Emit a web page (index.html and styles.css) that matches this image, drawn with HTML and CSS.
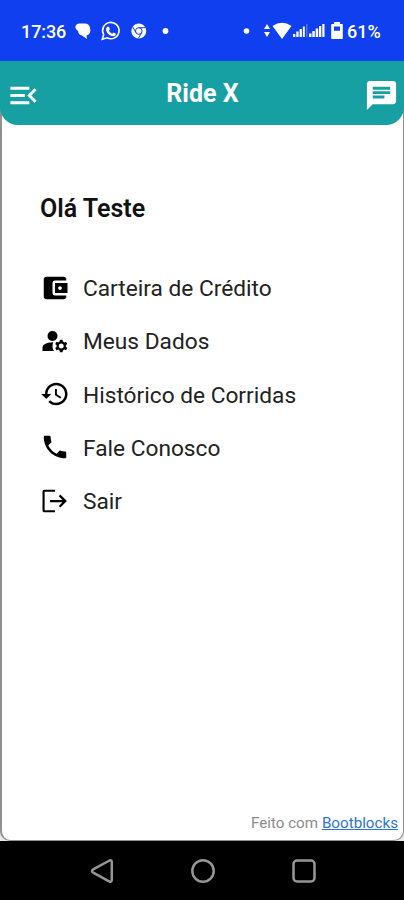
FILE: index.html
```
<!DOCTYPE html>
<html lang="pt-BR">
<head>
<meta charset="utf-8">
<meta name="viewport" content="width=device-width, initial-scale=1">
<title>Ride X</title>
<link rel="stylesheet" href="styles.css">
</head>
<body>
<div class="phone">
  <div class="status">
    <span class="time">17:36</span>
    <svg class="status-left" viewBox="72 18 100 26" width="100" height="26" fill="#fff">
      <path d="M79 23.500h6.500q4 .5 4.500 4.500q1.500 6-3.500 7.500l.5 3.500-5-3.500q-3.500-.5-4-4.500q-3-2-2.500-5q1-2.500 3.500-2.500Z"/>
      <path d="M102.300 39.300l1.400-4.700a8.200 8.200 0 1 1 3.300 3.200Z" fill="none" stroke="#fff" stroke-width="1.600"/>
      <path d="M107.300 26.700q1.200-.7 2 .8l.6 1.700-1 1.500q1.200 2.200 3.300 3l1.300-1.200 2.500 1.200q-.2 2.500-2.700 2.500-5.500-.7-7.300-5.800-.2-2.400 1.300-3.700Z"/>
      <circle cx="138.800" cy="31" r="7.500"/>
      <g fill="none" stroke="#103ff0" stroke-width="1"><circle cx="138.800" cy="31" r="3.300"/><path d="M138.800 27.700h6.500M136 32.600l-3.300-5.600M141.700 32.600l-3.300 5.700"/></g>
      <circle cx="165.500" cy="31" r="2.900"/>
    </svg>
    <svg class="status-right" viewBox="244 18 102 26" width="102" height="26" fill="#fff">
      <circle cx="247.500" cy="31" r="2.800"/>
      <path d="M265 29l3-5 3 5ZM265 32h6l-3 5Z"/>
      <path d="M273.500 26q9.500-6.500 19 0L283 39Z"/>
      <path d="M294 34h2.300v3H294ZM297.300 31.500h2.300V37h-2.300ZM300.600 29h2.300v8h-2.300ZM303.900 26.500h1.900V37h-1.900ZM310 33.500h2.500V37H310ZM313.300 31h2.500v6h-2.500ZM316.700 28.500h2.500V37h-2.500ZM320 26h2.300v11H320ZM323.300 24h2.200v13h-2.200Z"/>
      <path d="M307.300 24h1v13h-1Z" opacity=".4"/>
      <path fill-rule="evenodd" d="M335 22h6v2h2q.8 0 .8.800V38q0 1-.8 1h-10q-.8 0-.8-1V24.800q0-.8.800-.8h2ZM335 26.500v4.300h6v-4.300Z"/>
    </svg>
    <span class="battery">61%</span>
  </div>
  <div class="screen">
    <header class="header">
      <svg class="icon-open" viewBox="0 0 24 24" fill="#fff"><path d="M3 18h13v-2H3v2zm0-5h10v-2H3v2zm0-7v2h13V6H3zm18 9.590L17.420 12 21 8.410 19.590 7l-5 5 5 5L21 15.590z"/></svg>
      <h1 class="title">Ride X</h1>
      <svg class="icon-chat" viewBox="0 0 24 24" fill="#fff"><path d="M20 2H4c-1.100 0-1.990.9-1.990 2L2 22l4-4h14c1.100 0 2-.9 2-2V4c0-1.100-.9-2-2-2zM6 9h12v2H6V9zm8 5H6v-2h8v2zm4-6H6V6h12v2z"/></svg>
    </header>
    <main class="content">
      <h2 class="hello">Olá Teste</h2>
      <nav class="menu">
        <a class="item"><svg class="icon" viewBox="0 0 24 24"><path d="M21 18v1c0 1.100-.9 2-2 2H5c-1.110 0-2-.9-2-2V5c0-1.100.89-2 2-2h14c1.100 0 2 .9 2 2v1h-9c-1.110 0-2 .9-2 2v8c0 1.100.89 2 2 2h9zm-9-2h10V8H12v8zm4-2.500c-.83 0-1.500-.67-1.500-1.500s.67-1.500 1.500-1.500 1.500.67 1.500 1.500-.67 1.500-1.500 1.500z"/></svg><span>Carteira de Crédito</span></a>
        <a class="item"><svg class="icon" viewBox="0 0 24 24"><circle cx="10" cy="8" r="4"/><path d="M10.670 13.020C10.450 13.010 10.230 13 10 13c-2.420 0-4.680.67-6.610 1.820-.88.52-1.390 1.500-1.390 2.530V20h9.260c-.79-1.130-1.260-2.510-1.260-4 0-1.070.25-2.070.67-2.980zM20.750 16c0-.22-.03-.42-.06-.63l1.140-1.010-1-1.730-1.450.49c-.32-.27-.68-.48-1.080-.63L18 11h-2l-.3 1.490c-.4.150-.76.360-1.080.63l-1.450-.49-1 1.730 1.140 1.010c-.03.210-.06.410-.06.630s.03.420.06.630l-1.140 1.010 1 1.730 1.450-.49c.32.270.68.480 1.080.63L16 21h2l.3-1.490c.4-.15.76-.36 1.080-.63l1.450.49 1-1.730-1.140-1.010c.03-.21.06-.41.06-.63zM17 18c-1.100 0-2-.9-2-2s.9-2 2-2 2 .9 2 2-.9 2-2 2z"/></svg><span>Meus Dados</span></a>
        <a class="item"><svg class="icon" viewBox="0 0 24 24"><path d="M13 3c-4.970 0-9 4.030-9 9H1l3.890 3.890.07.140L9 12H6c0-3.870 3.130-7 7-7s7 3.130 7 7-3.130 7-7 7c-1.930 0-3.680-.79-4.940-2.060l-1.420 1.420C8.270 19.990 10.510 21 13 21c4.970 0 9-4.030 9-9s-4.030-9-9-9zm-1 5v5l4.280 2.540.72-1.210-3.500-2.080V8H12z"/></svg><span>Histórico de Corridas</span></a>
        <a class="item"><svg class="icon" viewBox="0 0 24 24"><path d="M6.620 10.790c1.440 2.830 3.760 5.140 6.590 6.590l2.200-2.200c.27-.27.670-.36 1.020-.24 1.120.37 2.330.57 3.570.57.550 0 1 .45 1 1V20c0 .55-.45 1-1 1-9.390 0-17-7.610-17-17 0-.55.450-1 1-1h3.500c.55 0 1 .45 1 1 0 1.250.2 2.450.57 3.570.11.350.03.740-.25 1.020l-2.200 2.200z"/></svg><span>Fale Conosco</span></a>
        <a class="item"><svg class="icon" viewBox="0 0 24 24"><path d="M12 3H3.500q-1.500 0-1.500 1.500v15q0 1.500 1.500 1.500H12v-1.600H3.700V4.600H12ZM8 11.100v1.800h10l-3 3 1.300 1.300 5.200-5.200-5.200-5.200-1.300 1.300 3 3Z"/></svg><span>Sair</span></a>
      </nav>
    </main>
    <footer class="credit"><span>Feito com</span> <a class="link">Bootblocks</a></footer>
  </div>
  <div class="navbar">
    <svg width="24" height="26" viewBox="0 0 24 26"><path d="M19.500 2.500 3.200 11.400q-2.400 1.600 0 3.200l16.300 8.900q2.300.8 2.300-1.700V4.200q0-2.500-2.300-1.700Z"/></svg>
    <svg width="26" height="26" viewBox="0 0 26 26"><circle cx="13" cy="13" r="10.700"/></svg>
    <svg width="26" height="26" viewBox="0 0 26 26"><rect x="2.500" y="2.500" width="21" height="21" rx="3.500"/></svg>
  </div>
</div>
</body>
</html>
```
FILE: styles.css
```
* { box-sizing: border-box; }
body { margin: 0; font-family: Roboto, sans-serif; background: #000; }
svg { display: block; flex: none; }
.phone { width: 404px; height: 900px; display: flex; flex-direction: column; overflow: hidden; background: #e8e8e8; }
.status { height: 61px; flex: none; background: #103ff0; color: #fff; display: flex; align-items: center; padding: 0 22px 0 21px; font-size: 18px; font-weight: 500; white-space: nowrap; }
.time { width: 51px; padding-top: 1px; letter-spacing: -0.1px; }
.status-right { margin-left: auto; }
.battery { width: 35px; margin-left: 2px; padding-top: 1px; }
.screen { flex: 1; display: flex; flex-direction: column; background: #fff; border: solid #909090; border-width: 0 1px 1px 2px; border-radius: 0 0 10px 10px; }
.header { height: 64px; flex: none; margin: 0 -1px 0 -2px; padding: 0 5px 0 6px; background: #17a0a3; border-radius: 0 0 18px 18px; display: flex; align-items: center; justify-content: space-between; }
.icon-open { width: 35px; height: 35px; margin-top: 5px; }
.icon-chat { width: 35px; height: 35px; margin-top: 5px; }
.title { margin: 2px 0 0; font-size: 25px; line-height: 30px; font-weight: 700; color: #fff; white-space: nowrap; }
.content { flex: 1; padding: 69px 20px 0 38px; }
.hello { margin: 0; font-size: 25px; line-height: 30px; font-weight: 600; color: #111; }
.menu { margin-top: 37px; display: flex; flex-direction: column; }
.item { height: 53.250px; display: flex; align-items: center; gap: 13px; font-size: 22.700px; color: #222; white-space: nowrap; }
.item span { padding-top: 2px; }
.icon { width: 30px; height: 30px; fill: #000; }
.credit { padding: 0 5px 7px; text-align: right; font-size: 15.200px; line-height: 20px; color: #8c8c8c; }
.link { color: #2e75d2; text-decoration: underline; }
.navbar { height: 59px; flex: none; background: #000; display: flex; justify-content: space-between; align-items: center; padding: 0 87px 0 90px; }
.navbar svg { fill: none; stroke: #969696; stroke-width: 2.500; }
```
